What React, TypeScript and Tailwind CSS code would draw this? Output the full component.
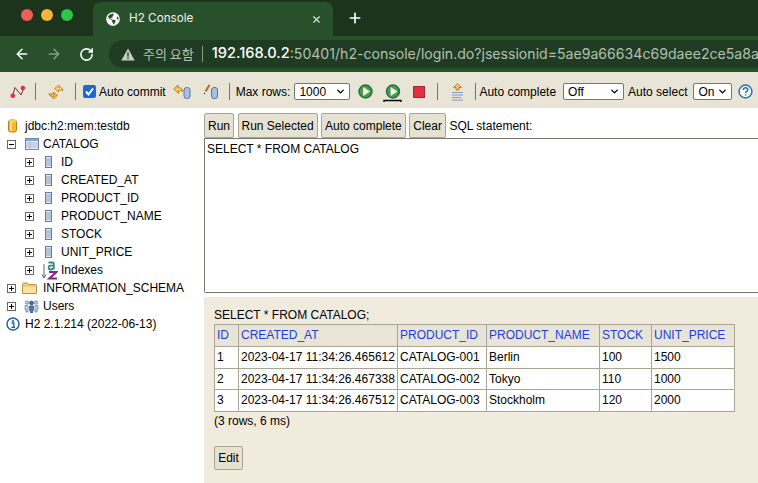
import { ArrowLeft, ArrowRight, ChevronDown, Plus, RotateCw, X } from "lucide-react";
import { FaGlobeAmericas } from "react-icons/fa";

const columns = ["ID", "CREATED_AT", "PRODUCT_ID", "PRODUCT_NAME", "STOCK", "UNIT_PRICE"];
const rows = [
  ["1", "2023-04-17 11:34:26.465612", "CATALOG-001", "Berlin", "100", "1500"],
  ["2", "2023-04-17 11:34:26.467338", "CATALOG-002", "Tokyo", "110", "1000"],
  ["3", "2023-04-17 11:34:26.467512", "CATALOG-003", "Stockholm", "120", "2000"],
];
const colWidths = ["w-[24px]", "w-[159px]", "w-[89px]", "w-[113px]", "w-[52px]", "w-[83px]"];

function Separator({ className }: { className: string }) {
  return <div className={`w-px h-[17px] bg-[#77766e] shrink-0 ${className}`} />;
}

function FakeSelect({ label, className }: { label: string; className: string }) {
  return (
    <div className={`h-[17px] shrink-0 flex items-center justify-between bg-white border border-[#77766e] rounded-[2px] pl-1 pr-[3px] text-[12px] ${className}`}>
      <span>{label}</span>
      <ChevronDown size={11} strokeWidth={3} className="text-black" />
    </div>
  );
}

function SqlButton({ label }: { label: string }) {
  return (
    <button className="h-[25px] px-[3px] shrink-0 bg-[#e6e2d2] border border-[#a8a594] rounded-[2px] text-[12px] text-black">
      {label}
    </button>
  );
}

function Toggle({ open, className }: { open?: boolean; className: string }) {
  return (
    <svg width="9" height="9" viewBox="0 0 9 9" className={`shrink-0 ${className}`}>
      <rect x="0.5" y="0.5" width="8" height="8" fill="#fff" stroke="#666" />
      <path d="M2 4.5h5" stroke="#000" />
      {!open && <path d="M4.5 2v5" stroke="#000" />}
    </svg>
  );
}

function ColumnIcon() {
  return (
    <svg width="7" height="12" viewBox="0 0 7 12" className="shrink-0 ml-[11px]">
      <rect x="0.5" y="0.5" width="6" height="11" fill="#dfe8f3" stroke="#5f7fa6" />
      <path d="M1 3h5M1 5h5M1 7h5M1 9h5" stroke="#8aa0bb" />
    </svg>
  );
}

function CylinderIcon() {
  return (
    <svg width="9" height="14" viewBox="0 0 9 14" className="shrink-0">
      <rect x="0.5" y="1" width="8" height="12" rx="2" fill="#f5b82e" stroke="#b9831a" />
      <rect x="2" y="2" width="2" height="10" fill="#fbe08a" />
      <ellipse cx="4.5" cy="2" rx="3.5" ry="1.3" fill="#fbd35a" />
    </svg>
  );
}

function TableIcon() {
  return (
    <svg width="14" height="12" viewBox="0 0 14 12" className="shrink-0">
      <rect x="0.5" y="0.5" width="13" height="11" fill="#e4ecf7" stroke="#6f88ab" />
      <rect x="1" y="1" width="12" height="2" fill="#8ea6c8" />
      <path d="M1 5h12M1 7h12M1 9h12" stroke="#a9bbd4" />
      <path d="M5 3v8" stroke="#a9bbd4" />
    </svg>
  );
}

function IndexIcon() {
  return (
    <svg width="17" height="19" viewBox="0 0 17 19" className="shrink-0 ml-[7px]">
      <path d="M3 3v13M1 13.500L3 17l2-3.500" fill="none" stroke="#666" strokeWidth="1" />
      <path d="M7.500 1.500h3.700c1 0 1.600.6 1.600 1.600V8.500M12.800 4.700H9.300c-1 0-1.700.6-1.700 1.900s.7 1.900 1.700 1.900c1.800 0 3.500-1 3.500-2.500" fill="none" stroke="#2c8a86" strokeWidth="1.800" />
      <path d="M8 11h7.500L8.500 17.500H16" fill="none" stroke="#7c2d85" strokeWidth="2.200" />
    </svg>
  );
}

function FolderIcon() {
  return (
    <svg width="15" height="13" viewBox="0 0 15 13" className="shrink-0 block">
      <path d="M0.500 11.500V2.500c0-.8.500-1.500 1.300-1.500h3.400l1.300 1.500h6.700c.6 0 1.300.500 1.300 1.300v7.700z" fill="#f0cf75" stroke="#b9923f" />
      <path d="M1 5h13v6H1z" fill="#fbe39a" />
    </svg>
  );
}

function UsersIcon() {
  return (
    <svg width="15" height="14" viewBox="0 0 15 14" className="shrink-0 block">
      <circle cx="3" cy="3.500" r="1.700" fill="#b9cde4" stroke="#4c6a90" strokeWidth=".6" />
      <circle cx="12" cy="3.500" r="1.700" fill="#b9cde4" stroke="#4c6a90" strokeWidth=".6" />
      <path d="M1 6.500h3v4H4v2.500H2v-2.500H1zM11 6.500h3v4h-1v2.500h-2v-2.500z" fill="#c6d6e8" stroke="#4c6a90" strokeWidth=".6" />
      <circle cx="7.500" cy="4" r="2" fill="#3f6aa3" stroke="#23456f" strokeWidth=".6" />
      <path d="M5.500 7h4v4.500h-1V14h-2v-2.500h-1z" fill="#4b78b2" stroke="#23456f" strokeWidth=".6" />
    </svg>
  );
}

function InfoIcon() {
  return (
    <svg width="14" height="14" viewBox="0 0 14 14" className="shrink-0">
      <circle cx="7" cy="7" r="6" fill="#fff" stroke="#1d63a8" strokeWidth="1.500" />
      <circle cx="7" cy="4" r="1.100" fill="#1d63a8" />
      <path d="M5.500 6h2.300v4.200H9M5.300 10.400h3.700" fill="none" stroke="#1d63a8" strokeWidth="1.300" />
    </svg>
  );
}

function RunIcon() {
  return (
    <>
      <circle cx="7" cy="7" r="6" fill="#4d9a55" stroke="#28713a" strokeWidth="1.500" />
      <path d="M4.800 2.800v8.400L11.200 7z" fill="#f0f6e4" />
    </>
  );
}

export default function App() {
  return (
    <div className="w-[758px] h-[483px] overflow-hidden bg-white text-black font-['Liberation_Sans',Arial,sans-serif] flex flex-col">
      {/* Browser tab strip */}
      <div className="h-[36px] shrink-0 bg-[#1c341c] flex items-end font-['Inter','Liberation_Sans',sans-serif]">
        <div className="flex items-center gap-2 self-start mt-[9px] ml-[21px] shrink-0">
          <div className="w-3 h-3 rounded-full bg-[#ee5f57]" />
          <div className="w-3 h-3 rounded-full bg-[#f6b23c]" />
          <div className="w-3 h-3 rounded-full bg-[#2ec645]" />
        </div>
        <div className="ml-[20px] w-[240px] h-[34px] bg-[#28502b] rounded-t-[8px] flex items-center pl-[13px] pr-[11px] text-white">
          <FaGlobeAmericas size={14} />
          <span className="ml-[9px] text-[11.700px] flex-1 text-[#edf2ec]">H2 Console</span>
          <X size={11} strokeWidth={2.500} className="text-[#d8e2d6]" />
        </div>
        <Plus size={16} strokeWidth={2.500} className="text-white ml-[14px] mb-[10px]" />
      </div>

      {/* Browser address bar */}
      <div className="h-[36px] shrink-0 bg-[#28502b] flex items-center pl-[14px]">
        <ArrowLeft size={16} strokeWidth={2.200} className="text-white" />
        <ArrowRight size={16} strokeWidth={2.200} className="text-[#83a082] ml-[16px]" />
        <RotateCw size={15} strokeWidth={2.500} className="text-white ml-[17px]" />
        <div className="ml-[15px] flex-1 min-w-0 h-[28px] bg-[#1f3b22] rounded-l-[14px] flex items-center pl-[12px] overflow-hidden whitespace-nowrap font-['Inter','Noto_Sans_CJK_KR',sans-serif] text-[14.600px]">
          <svg width="14" height="13" viewBox="0 0 14 13" className="shrink-0">
            <path d="M7 0.500L13.800 12.500H.2z" fill="#c3cdc2" />
            <path d="M7 4.500v4M7 9.500v1.500" stroke="#1f3b22" strokeWidth="1.400" />
          </svg>
          <span className="ml-[8px] text-[13px] text-[#b6c3b5] font-['Noto_Sans_CJK_KR',sans-serif]">주의 요함</span>
          <div className="w-px h-[16px] bg-[#8a9c89] ml-[8px] mr-[9px] shrink-0" />
          <span className="text-white font-medium">192.168.0.2</span>
          <span className="text-[#b1c0b0] text-[14.100px]">:50401/h2-console/login.do?jsessionid=5ae9a66634c69daee2ce5a8ae</span>
        </div>
      </div>

      {/* H2 toolbar */}
      <div className="h-[36px] shrink-0 bg-[#e8e5d6] flex items-center pt-[3px] text-[12px] whitespace-nowrap">
        <svg width="16" height="14" viewBox="0 0 16 14" className="ml-[10px] shrink-0">
          <path d="M2.500 11L5 2.500 11 10 14 3" fill="none" stroke="#7a2a38" strokeWidth="1" />
          <circle cx="2.800" cy="10.800" r="2.300" fill="#dc2f50" />
          <circle cx="12.800" cy="3" r="2.300" fill="#dc2f50" />
        </svg>
        <Separator className="ml-[9px]" />
        <svg width="16" height="16" viewBox="0 0 16 16" className="ml-[12px] shrink-0">
          <path d="M15 6.500C14.500 4 13 3 11 3.500V1L6.500 4.500 10.500 8V6c1.500 0 3 0 4.500 .5z" fill="#f9d179" stroke="#b77a17" strokeWidth=".8" />
          <path d="M1 9.500C1.500 12 3 13 5 12.500V15L9.500 11.500 5.500 8v2C4 10 2.500 10 1 9.500z" fill="#f4b23a" stroke="#b77a17" strokeWidth=".8" />
        </svg>
        <Separator className="ml-[11px]" />
        <div className="ml-[7px] w-[13px] h-[13px] rounded-[2px] bg-[#1d68d9] flex items-center justify-center shrink-0">
          <svg width="11" height="11" viewBox="0 0 11 11">
            <path d="M2 5.500l2.500 3L9 2.500" fill="none" stroke="#fff" strokeWidth="2" />
          </svg>
        </div>
        <span className="ml-[3px]">Auto commit</span>
        <svg width="18" height="15" viewBox="0 0 18 15" className="ml-[7px] shrink-0">
          <path d="M.8 5L5 1v2.500c2.500 0 4.500 1 5 3.500H5.500v2.500z" fill="#f6c860" stroke="#a86d12" strokeWidth=".8" />
          <rect x="11" y="3.500" width="6" height="11" rx="2.500" fill="#a9c0e0" stroke="#4e74a8" />
        </svg>
        <svg width="15" height="15" viewBox="0 0 15 15" className="ml-[13px] shrink-0">
          <path d="M1.500 7.500L5.500 1" stroke="#b0703a" strokeWidth="2.200" />
          <path d="M.5 9v1" stroke="#000" />
          <rect x="7.500" y="3.500" width="6" height="11" rx="2.500" fill="#a9c0e0" stroke="#4e74a8" />
        </svg>
        <Separator className="ml-[10px]" />
        <span className="ml-[6px]">Max rows:</span>
        <FakeSelect label="1000" className="ml-[4px] w-[56px]" />
        <svg width="15" height="15" viewBox="0 0 14 14" className="ml-[8px] shrink-0">
          <RunIcon />
        </svg>
        <svg width="19" height="19" viewBox="0 0 19 19" className="ml-[10px] mt-[3px] shrink-0">
          <g transform="translate(2.500 0) scale(1.070)">
            <RunIcon />
          </g>
          <path d="M1 18v-1.500h17V18" fill="none" stroke="#000" strokeWidth="1.300" />
        </svg>
        <div className="ml-[11px] w-[12px] h-[12px] bg-[#e0303f] border border-[#a52636] shrink-0" />
        <Separator className="ml-[12px]" />
        <svg width="13" height="18" viewBox="0 0 13 18" className="ml-[13px] shrink-0">
          <path d="M6.500 0.500L10.500 4.500H8V7H5V4.500H2.500z" fill="#f6c760" stroke="#a86d12" strokeWidth=".8" />
          <path d="M1 9.500h11M1 12h11M1 14.500h9M1 17h11" stroke="#7b9bcb" />
        </svg>
        <Separator className="ml-[11px]" />
        <span className="ml-[3px]">Auto complete</span>
        <FakeSelect label="Off" className="ml-[7px] w-[61px]" />
        <span className="ml-[4px]">Auto select</span>
        <FakeSelect label="On" className="ml-[6px] w-[39px]" />
        <svg width="15" height="15" viewBox="0 0 14 14" className="ml-[6px] shrink-0">
          <circle cx="7" cy="7" r="6" fill="#fff" stroke="#2a6fc0" strokeWidth="1.400" />
          <path d="M5 5.500c0-1.300 1-2 2.100-2s2 .7 2 1.800c0 1.500-2 1.500-2 3M7.100 9.500v1.300" fill="none" stroke="#2a6fc0" strokeWidth="1.500" />
        </svg>
      </div>

      <div className="flex-1 min-h-0 flex">
        {/* Object tree */}
        <div className="w-[204px] shrink-0 pt-[9px] pl-[7px] text-[12px] leading-[18px] whitespace-nowrap">
          <div className="h-[18px] flex items-center pl-[1px]">
            <CylinderIcon />
            <span className="ml-[8px]">jdbc:h2:mem:testdb</span>
          </div>
          <div className="h-[18px] flex items-center">
            <Toggle open className="" />
            <span className="ml-[9px] flex items-center gap-[4px]">
              <TableIcon />
              CATALOG
            </span>
          </div>
          {columns.map((name) => (
            <div key={name} className="h-[18px] flex items-center">
              <Toggle className="ml-[18px]" />
              <ColumnIcon />
              <span className="ml-[9px]">{name}</span>
            </div>
          ))}
          <div className="h-[18px] flex items-center">
            <Toggle className="ml-[18px]" />
            <IndexIcon />
            <span className="ml-[3px]">Indexes</span>
          </div>
          <div className="h-[18px] flex items-center">
            <Toggle className="" />
            <span className="ml-[6px]"><FolderIcon /></span>
            <span className="ml-[6px]">INFORMATION_SCHEMA</span>
          </div>
          <div className="h-[18px] flex items-center">
            <Toggle className="" />
            <span className="ml-[8px]"><UsersIcon /></span>
            <span className="ml-[4px]">Users</span>
          </div>
          <div className="h-[18px] flex items-center -ml-[1px]">
            <InfoIcon />
            <span className="ml-[5px]">H2 2.1.214 (2022-06-13)</span>
          </div>
        </div>

        {/* Query + results */}
        <div className="flex-1 min-w-0 flex flex-col text-[12px]">
          <div className="h-[5px] shrink-0" />
          <div className="flex items-center gap-[3.500px] h-[25px] shrink-0">
            <SqlButton label="Run" />
            <SqlButton label="Run Selected" />
            <SqlButton label="Auto complete" />
            <SqlButton label="Clear" />
            <span>SQL statement:</span>
          </div>
          <div className="h-[155px] shrink-0 border border-r-0 border-[#77766e] rounded-bl-[2px] pl-[2px] pt-[1px]">
            SELECT * FROM CATALOG
          </div>
          <div className="flex-1 mt-[4px] bg-[#f1ebdd] pl-[10px] pt-[10px]">
            <div className="h-[17px] leading-[17px]">SELECT * FROM CATALOG;</div>
            <table className="border-collapse table-fixed w-[520px]">
              <thead>
                <tr className="h-[22px]">
                  {columns.map((c, i) => (
                    <th key={c} className={`border border-[#a8a594] bg-[#e8e5d6] text-left font-normal text-[#1a3fe0] px-[2px] pt-0 pb-[2px] ${colWidths[i]}`}>
                      {c}
                    </th>
                  ))}
                </tr>
              </thead>
              <tbody>
                {rows.map((r) => (
                  <tr key={r[0]} className="h-[21.500px]">
                    {r.map((v, i) => (
                      <td key={i} className="border border-[#a8a594] bg-white px-[2px] py-0 whitespace-nowrap">
                        {v}
                      </td>
                    ))}
                  </tr>
                ))}
              </tbody>
            </table>
            <div className="mt-[1px] h-[17px] leading-[17px]">(3 rows, 6 ms)</div>
            <button className="mt-[16px] h-[24px] w-[29px] bg-[#e6e2d2] border border-[#a8a594] rounded-[2px] text-[12px]">Edit</button>
          </div>
        </div>
      </div>
    </div>
  );
}
